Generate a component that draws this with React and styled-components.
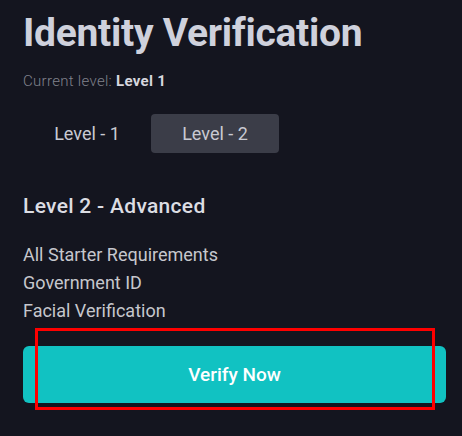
import React from 'react';
import styled, { createGlobalStyle } from 'styled-components';

const GlobalStyle = createGlobalStyle`
  html, body {
    margin: 0;
    padding: 0;
    background: #14151f;
  }
  body {
    font-family: Roboto, "Liberation Sans", sans-serif;
  }
`;

const StyledPage = styled.div`
  position: relative;
  width: 462px;
  height: 436px;
  padding: 0 16px 0 23px;
  box-sizing: border-box;
  background: #14151f;
  overflow: hidden;
`;

const StyledTitle = styled.h1`
  margin: 0;
  padding-top: 11px;
  font-size: 39px;
  line-height: 44px;
  font-weight: 700;
  color: #cfd1dc;
  letter-spacing: -0.3px;
`;

const StyledCurrent = styled.div`
  margin-top: 17px;
  font-size: 15px;
  line-height: 18px;
  font-weight: 300;
  color: #80828c;
  letter-spacing: 0.3px;

  b {
    color: #d6d7de;
    font-weight: 700;
  }
`;

const StyledTabs = styled.div`
  display: flex;
  margin-top: 24px;
`;

const StyledTab = styled.div`
  width: 128px;
  height: 39px;
  display: flex;
  align-items: center;
  justify-content: center;
  border-radius: 4px;
  font-size: 18px;
  font-weight: 400;
  color: #c9cad2;
  background: ${(p) => (p.active ? '#3b3d48' : 'transparent')};
`;

const StyledLevelTitle = styled.h2`
  margin: 41px 0 0;
  font-size: 21px;
  line-height: 24px;
  font-weight: 500;
  color: #dcdde3;
  letter-spacing: 0.3px;
`;

const StyledList = styled.ul`
  list-style: none;
  margin: 23px 0 0;
  padding: 0;
`;

const StyledItem = styled.li`
  font-size: 18px;
  line-height: 28px;
  color: #c6c7cd;
`;

const StyledButton = styled.button`
  display: block;
  width: 423px;
  height: 57px;
  margin-top: 21px;
  border: none;
  border-radius: 6px;
  background: #11c2c2;
  color: #ffffff;
  font-family: inherit;
  font-size: 19px;
  font-weight: 500;
  cursor: pointer;
`;

const StyledHighlight = styled.div`
  position: absolute;
  left: 35px;
  top: 328px;
  width: 400px;
  height: 82px;
  border: 3px solid #ff0000;
  box-sizing: border-box;
  pointer-events: none;
`;

const levels = ['Level - 1', 'Level - 2'];
const requirements = ['All Starter Requirements', 'Government ID', 'Facial Verification'];

const App = () => {
  return (
    <StyledPage>
      <GlobalStyle />
      <StyledTitle>Identity Verification</StyledTitle>
      <StyledCurrent>
        Current level: <b>Level 1</b>
      </StyledCurrent>
      <StyledTabs>
        {levels.map((l, i) => (
          <StyledTab key={l} active={i === 1}>
            {l}
          </StyledTab>
        ))}
      </StyledTabs>
      <StyledLevelTitle>Level 2 - Advanced</StyledLevelTitle>
      <StyledList>
        {requirements.map((r) => (
          <StyledItem key={r}>{r}</StyledItem>
        ))}
      </StyledList>
      <StyledButton>Verify Now</StyledButton>
      <StyledHighlight />
    </StyledPage>
  );
};

export default App;
